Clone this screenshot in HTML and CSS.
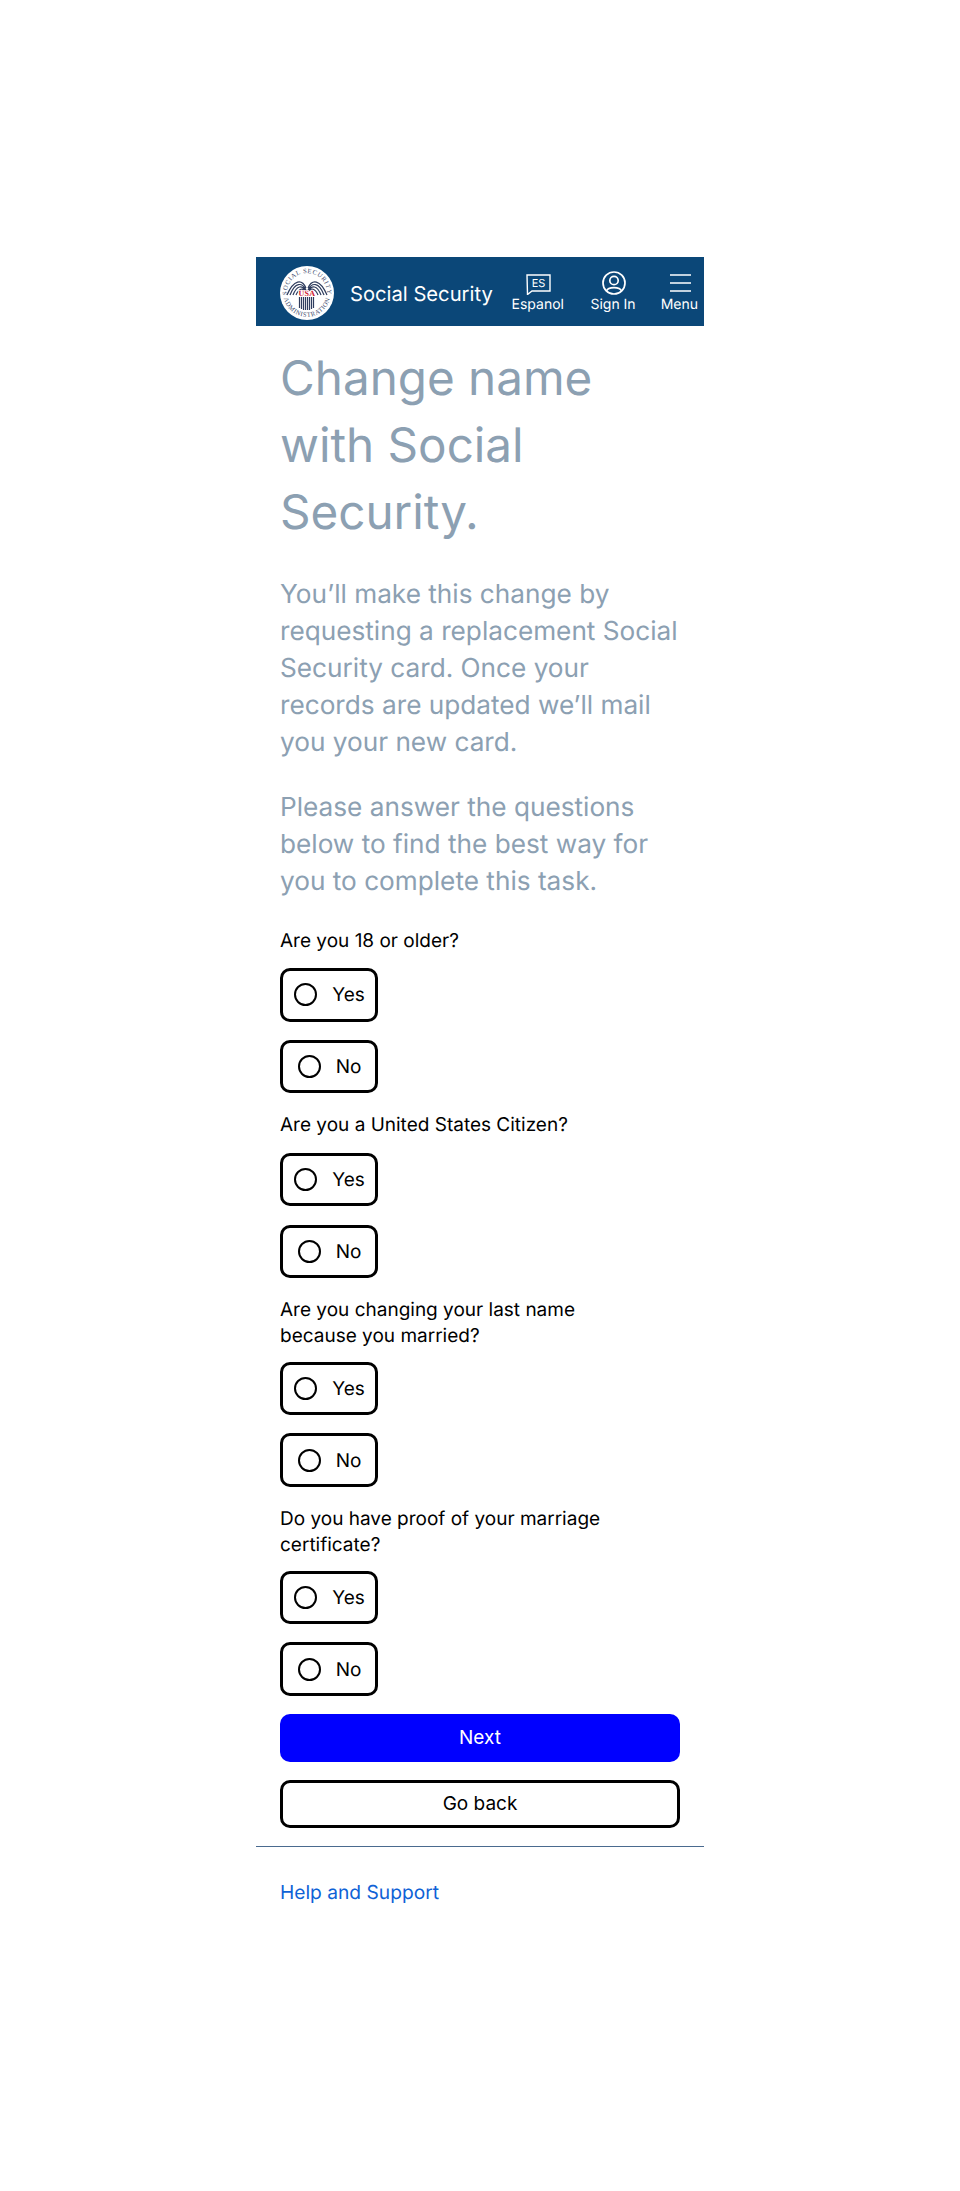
FILE: index.html
```html
<!DOCTYPE html>
<html lang="en">
<head>
    <meta charset="UTF-8">
    <meta name="viewport" content="width=device-width, initial-scale=1.0">
    <title>Change name with Social Security</title>
    <link rel="stylesheet" href="styles.css">
</head>
<body>
    <div class="container">
        <div class="header">
            <svg class="logo" viewBox="0 0 54 54">
                <defs>
                    <path id="arcTop" d="M7.3 30.5 A20 20 0 1 1 46.7 30.5"></path>
                    <path id="arcBottom" d="M3.5 24 A23.7 23.7 0 1 0 50.5 24"></path>
                </defs>
                <circle cx="27" cy="27" r="27" fill="#fff"></circle>
                <text class="logo-ring"><textPath href="#arcTop" startOffset="50%" text-anchor="middle">SOCIAL SECURITY</textPath></text>
                <text class="logo-ring"><textPath href="#arcBottom" startOffset="50%" text-anchor="middle">ADMINISTRATION</textPath></text>
                <path class="logo-wing" d="M26 22 C22 13 14 13 7 29 M26 24 C22 16 15 16 10 29 M26 25 C22 19 17 19 13 29 M25 25 C23 22 19 22 16 29 M28 22 C32 13 40 13 47 29 M28 24 C32 16 39 16 44 29 M28 25 C32 19 37 19 41 29 M29 25 C31 22 35 22 38 29"></path>
                <text class="logo-usa" x="27" y="30" text-anchor="middle">USA</text>
                <path class="logo-bars" d="M19.5 31V42 M21.5 31V43 M23.5 31V44 M25.5 31V44 M27.5 31V44 M29.5 31V44 M31.5 31V43 M33.5 31V42"></path>
            </svg>
            <span class="brand">Social Security</span>
            <div class="nav">
                <div class="nav-item">
                    <svg class="nav-icon" viewBox="0 0 26 24">
                        <path d="M2 4H25V20H7L2.5 23.5Z" fill="none" stroke="#fff" stroke-width="1.4"></path>
                        <text class="es-text" x="13.5" y="16" text-anchor="middle">ES</text>
                    </svg>
                    <span>Espanol</span>
                </div>
                <div class="nav-item">
                    <svg class="nav-icon" viewBox="0 0 26 24">
                        <circle cx="14" cy="12" r="11" fill="none" stroke="#fff" stroke-width="1.7"></circle>
                        <circle cx="14" cy="9.5" r="4.2" fill="none" stroke="#fff" stroke-width="1.7"></circle>
                        <path d="M6.5 20 C8 15.5 20 15.5 21.5 20" fill="none" stroke="#fff" stroke-width="1.7"></path>
                    </svg>
                    <span>Sign In</span>
                </div>
                <div class="nav-item">
                    <svg class="nav-icon" viewBox="0 0 26 24">
                        <path d="M4 4H25 M4 12H25 M4 20H25" fill="none" stroke="#fff" stroke-width="1.6"></path>
                    </svg>
                    <span>Menu</span>
                </div>
            </div>
        </div>

        <div class="content">
            <h1>Change name with&nbsp;Social Security.</h1>
            <p class="intro">You’ll make this change by requesting a replacement Social Security card. Once your records are updated we’ll mail you your new card.</p>
            <p class="intro">Please answer the questions below to find the best way for you to complete this task.</p>

            <div class="question">
                <p class="label">Are you 18 or older?</p>
                <div class="radio"><span class="dot"></span>Yes</div>
                <div class="radio"><span class="dot"></span>No</div>
            </div>
            <div class="question">
                <p class="label">Are you a United States Citizen?</p>
                <div class="radio"><span class="dot"></span>Yes</div>
                <div class="radio"><span class="dot"></span>No</div>
            </div>
            <div class="question">
                <p class="label label-long">Are you changing your last name because you married?</p>
                <div class="radio"><span class="dot"></span>Yes</div>
                <div class="radio"><span class="dot"></span>No</div>
            </div>
            <div class="question">
                <p class="label label-long">Do you have proof of your marriage certificate?</p>
                <div class="radio"><span class="dot"></span>Yes</div>
                <div class="radio"><span class="dot"></span>No</div>
            </div>

            <button class="btn btn-next">Next</button>
            <button class="btn btn-back">Go back</button>
        </div>

        <div class="footer">
            <a href="#">Help and Support</a>
        </div>
    </div>
</body>
</html>
```

FILE: styles.css
```css
:root {
    --navy: #0b4778;
    --muted: #8ca0b2;
    --ink: #000000;
    --link: #0f62d6;
}

body {
    font-family: Inter, 'Noto Sans', sans-serif;
    background-color: #ffffff;
    color: var(--ink);
    margin: 0;
    text-rendering: geometricPrecision;
}

.container {
    width: 448px;
    margin: 257px 0 0 256px;
}

.header {
    height: 69px;
    background-color: var(--navy);
    color: #ffffff;
    display: flex;
    align-items: center;
    padding-left: 24px;
}

.logo {
    width: 54px;
    height: 54px;
    flex: none;
    margin-top: 2px;
}

.logo-ring {
    font-family: 'Liberation Serif', serif;
    font-size: 6.5px;
    letter-spacing: 0.6px;
    fill: #3c4a6b;
}

.logo-wing {
    fill: none;
    stroke: #2f3d5e;
    stroke-width: 1.2;
}

.logo-usa {
    font-family: 'Liberation Serif', serif;
    font-size: 8px;
    font-weight: bold;
    letter-spacing: 0.3px;
    fill: #d0202e;
    stroke: #fff;
    stroke-width: 1.5px;
    paint-order: stroke;
}

.logo-bars {
    fill: none;
    stroke: #2f3d5e;
    stroke-width: 1.2;
}

.brand {
    font-size: 20.2px;
    margin: 4px 0 0 16px;
    white-space: nowrap;
}

.nav {
    display: flex;
    margin-left: auto;
    gap: 25px;
    padding-right: 6px;
}

.nav-item {
    display: flex;
    flex-direction: column;
    align-items: center;
    font-size: 14px;
    line-height: 17px;
}

.nav-item:first-child {
    margin-right: 1.5px;
}

.nav-icon {
    width: 26px;
    height: 24px;
    margin: 1px 0;
}

.es-text {
    font-size: 11px;
    fill: #ffffff;
}

.content {
    padding: 0 24px;
}

h1 {
    font-size: 47.6px;
    font-weight: 400;
    line-height: 67px;
    color: var(--muted);
    margin: 19px 0 0;
}

.intro {
    font-size: 26.2px;
    line-height: 37px;
    color: var(--muted);
    margin: 27.5px 0 0;
}

h1 + .intro {
    margin-top: 30px;
}

.question {
    margin-top: 19.15px;
}

.intro + .question {
    margin-top: 28px;
}

.label {
    font-size: 19px;
    line-height: 25.7px;
    margin: 0 0 15px;
    padding-right: 40px;
}

.label-long {
    margin-bottom: 13.5px;
}

.radio {
    box-sizing: border-box;
    width: 98px;
    height: 53.3px;
    border: 3px solid var(--ink);
    border-radius: 10px;
    display: flex;
    align-items: center;
    justify-content: center;
    gap: 15px;
    padding-left: 1px;
    font-size: 19px;
}

.radio + .radio {
    margin-top: 18.3px;
}

.dot {
    width: 23px;
    height: 23px;
    box-sizing: border-box;
    border: 2px solid var(--ink);
    border-radius: 50%;
}

.btn {
    display: block;
    box-sizing: border-box;
    width: 100%;
    height: 48px;
    border-radius: 10px;
    font-family: inherit;
    font-size: 19px;
}

.btn-next {
    margin-top: 18px;
    background-color: #0000ff;
    color: #ffffff;
    border: none;
}

.btn-back {
    margin-top: 18px;
    background-color: #ffffff;
    color: var(--ink);
    border: 3px solid var(--ink);
}

.footer {
    margin-top: 18px;
    border-top: 1px solid #4a6a8f;
    padding: 33px 24px;
    font-size: 19.2px;
}

.footer a {
    color: var(--link);
    text-decoration: none;
}
```
